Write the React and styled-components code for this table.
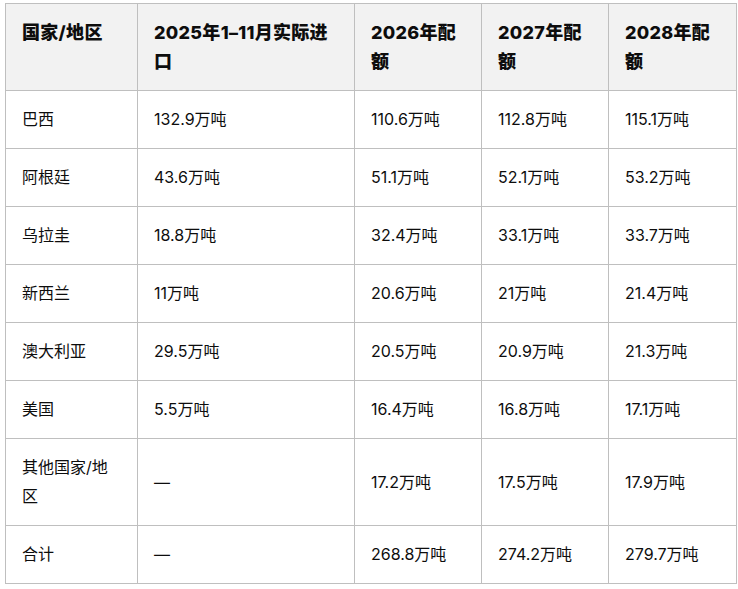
import styled, { createGlobalStyle } from "styled-components";

const GlobalStyle = createGlobalStyle`
  body {
    margin: 0;
    background: #ffffff;
  }
`;

const headers = ["国家/地区", "2025年1–11月实际进口", "2026年配额", "2027年配额", "2028年配额"];

const rows = [
  ["巴西", "132.9万吨", "110.6万吨", "112.8万吨", "115.1万吨"],
  ["阿根廷", "43.6万吨", "51.1万吨", "52.1万吨", "53.2万吨"],
  ["乌拉圭", "18.8万吨", "32.4万吨", "33.1万吨", "33.7万吨"],
  ["新西兰", "11万吨", "20.6万吨", "21万吨", "21.4万吨"],
  ["澳大利亚", "29.5万吨", "20.5万吨", "20.9万吨", "21.3万吨"],
  ["美国", "5.5万吨", "16.4万吨", "16.8万吨", "17.1万吨"],
  ["其他国家/地区", "—", "17.2万吨", "17.5万吨", "17.9万吨"],
  ["合计", "—", "268.8万吨", "274.2万吨", "279.7万吨"],
];

const colWidths = [132, 217, 127, 127, 128];

export default function App() {
  return (
    <Page>
      <GlobalStyle />
      <Table>
        <colgroup>
          {colWidths.map((w, i) => (
            <col key={i} style={{ width: w }} />
          ))}
        </colgroup>
        <thead>
          <tr>
            {headers.map((h) => (
              <HeadCell key={h}>{h}</HeadCell>
            ))}
          </tr>
        </thead>
        <tbody>
          {rows.map((r) => (
            <tr key={r[0]}>
              {r.map((c, i) => (
                <Cell key={i}>{c}</Cell>
              ))}
            </tr>
          ))}
        </tbody>
      </Table>
    </Page>
  );
}

const Page = styled.div`
  padding: 3px 0 0 5px;
  font-family: "Inter", "Noto Sans CJK SC", sans-serif;
  color: #0d0d0d;
`;

const Table = styled.table`
  border-collapse: collapse;
  table-layout: fixed;
  width: 731px;
`;

const HeadCell = styled.th`
  border: 1px solid #bfbfbf;
  background: #f2f2f2;
  padding: 14px 16px;
  font-size: 18px;
  font-weight: 800;
  letter-spacing: 0.3px;
  line-height: 29px;
  text-align: left;
  vertical-align: top;
`;

const Cell = styled.td`
  border: 1px solid #bfbfbf;
  padding: 14px 16px;
  font-size: 16px;
  line-height: 29px;
  text-align: left;
  vertical-align: middle;
`;
